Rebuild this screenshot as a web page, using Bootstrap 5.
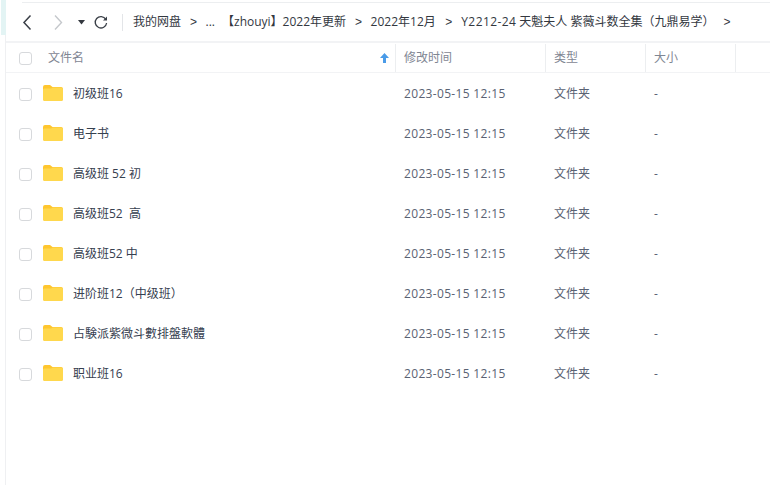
<!DOCTYPE html>
<html lang="zh-CN">
<head>
<meta charset="utf-8">
<title>文件列表</title>
<link href="https://cdn.jsdelivr.net/npm/bootstrap@5.3.0/dist/css/bootstrap.min.css" rel="stylesheet">
<style>
html,body{height:100%;overflow:hidden;background:#fff}
body{font-family:"Open Sans","Noto Sans CJK SC",sans-serif;font-size:12px;color:#424e67}
.shell{height:485px;border-left:1px solid #eff0f2;margin-left:5px;position:relative}
.corner{position:absolute;left:-5px;top:0;width:5px;height:35px;background:#e3f4f4}
.toolbar{height:43px;padding-top:3px;border-bottom:2px solid #f2f3f5;position:relative;color:#33383f;white-space:nowrap}
.toolbar::before{content:"";position:absolute;left:16px;right:0;top:2px;height:1px;background:#eceef0}
.tool{width:22px;height:22px;flex:none}
.tback{margin-left:10px}
.tfwd{margin-left:9px}
.tcaret{width:9px;margin-left:8px}
.trefresh{margin-left:4px}
.tsep{width:1px;height:17px;background:#e3e5e8;margin:0 10px 0 10px}
.crumb{font-size:12px;line-height:18px}
.arrow{margin:0 8.5px 0 9px;font-family:"Liberation Sans",sans-serif}
.arrow-wide{margin:0 9px 0 9.5px}
.crumb-gap{margin-left:7px}
.latin{letter-spacing:.4px}
.thead-row{height:30px;padding-top:1px;border-bottom:1px solid #f2f3f5;color:#7f8693}
.cellc{width:37px;flex:none}
.celln{width:353px;flex:none}
.cellt{width:150px;flex:none}
.celly{width:100px;flex:none}
.cells{width:90px;flex:none}
.thead-row>div{height:28px;line-height:28px;border-right:1px solid #eceef0}
.thead-row>.cellc{border-right:0}
.thead-row .celln{padding-left:5px;padding-right:6px}
.thead-row .cellt,.thead-row .celly,.thead-row .cells{padding-left:8px}
.rows-wrap{padding-top:1px}
.frow{height:40px}
.frow .cellt,.frow .celly,.frow .cells{padding-left:8px;color:#5a6273}
.datecell{letter-spacing:.33px}
.fname{color:#36404f}
.fbox{display:block;width:13px;height:13px;border:1px solid #d7d9dc;border-radius:3px;background:#fff;margin-left:13px}
.folder{width:20px;height:16px;flex:none;margin-right:10px;margin-top:-2px}
</style>
</head>
<body>
<div class="shell">
  <div class="corner"></div>
  <div class="toolbar d-flex align-items-center">
    <svg class="tool tback" viewBox="0 0 22 22" fill="none" stroke="#3a3f47" stroke-width="1.5"><path d="M14.5 4.5 8 11.5l6.5 7"/></svg>
    <svg class="tool tfwd" viewBox="0 0 22 22" fill="none" stroke="#c5c8cc" stroke-width="1.4"><path d="M8 4.5l6.5 7-6.5 7"/></svg>
    <svg class="tool tcaret" viewBox="0 0 9 22" fill="#33383f"><path d="M1 9h7l-3.5 4.500z"/></svg>
    <svg class="tool trefresh" viewBox="0 0 22 22" fill="none" stroke="#3a3f47" stroke-width="1.3"><path d="M15.800 8.300A5.700 5.700 0 1 0 16.600 12"/><path d="M17 5.500v4h-4z" fill="#3a3f47" stroke="none"/></svg>
    <span class="tsep"></span>
    <div class="crumb d-flex align-items-center">
      <span>我的网盘</span><span class="arrow">&gt;</span>
      <span>...</span>
      <span class="crumb-gap">【zhouyi】2022年更新</span><span class="arrow">&gt;</span>
      <span>2022年12月</span><span class="arrow arrow-wide">&gt;</span>
      <span><span class="latin">Y2212-24</span> 天魁夫人 紫薇斗数全集（九鼎易学）</span><span class="arrow">&gt;</span>
    </div>
  </div>
  <div class="thead-row d-flex">
    <div class="cellc d-flex align-items-center"><span class="fbox"></span></div>
    <div class="celln d-flex align-items-center justify-content-between"><span>文件名</span>
      <svg width="9" height="10" viewBox="0 0 9 10" fill="#4a9be8"><path d="M4.500 0 9 5H6v5H3V5H0z"/></svg></div>
    <div class="cellt">修改时间</div>
    <div class="celly">类型</div>
    <div class="cells">大小</div>
  </div>
  <div id="rows" class="rows-wrap"></div>
</div>
<script src="https://cdn.jsdelivr.net/npm/bootstrap@5.3.0/dist/js/bootstrap.bundle.min.js"></script>
<script>
var names=["初级班16","电子书","高级班 52 初","高级班52&nbsp;&nbsp;高","高级班52 中","进阶班12（中级班）","占験派紫微斗數排盤軟體","职业班16"];
document.getElementById('rows').innerHTML=names.map(function(n){
return '<div class="frow d-flex align-items-center"><div class="cellc"><span class="fbox"></span></div>'+
'<div class="celln d-flex align-items-center"><svg class="folder" viewBox="0 0 20 16"><path d="M0 2A2 2 0 0 1 2 0h5l2.500 2H18a2 2 0 0 1 2 2v10a2 2 0 0 1-2 2H2a2 2 0 0 1-2-2z" fill="#ffc62e"/><path d="M0 5a1.500 1.500 0 0 1 1.500-1.500H8L10 2.500h8a2 2 0 0 1 2 2V14a2 2 0 0 1-2 2H2a2 2 0 0 1-2-2z" fill="#ffd84d"/></svg><span class="fname">'+n+'</span></div>'+
'<div class="cellt datecell">2023-05-15 12:15</div><div class="celly">文件夹</div><div class="cells">-</div></div>';
}).join('');
</script>
</body>
</html>
